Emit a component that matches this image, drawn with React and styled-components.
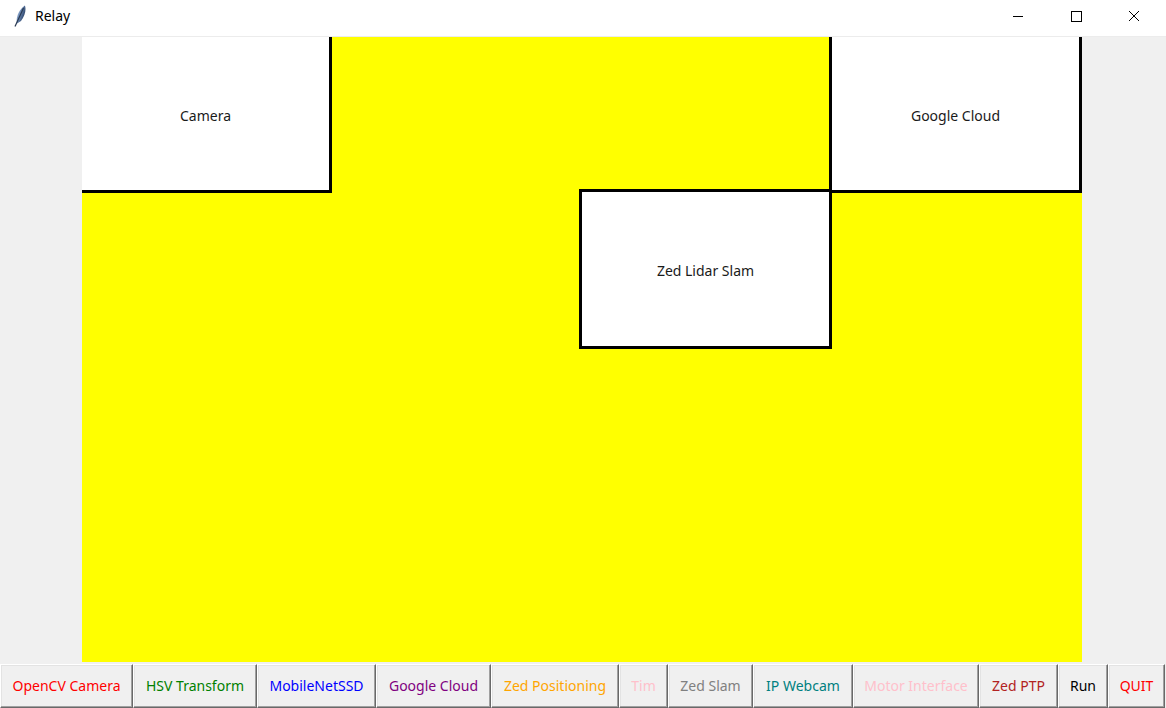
import React from 'react';
import styled, { createGlobalStyle } from 'styled-components';

const GlobalStyle = createGlobalStyle`
  html, body {
    margin: 0;
    padding: 0;
    background: #f0f0f0;
  }
  body {
    font-family: "Noto Sans", "Open Sans", "Liberation Sans", sans-serif;
    font-size: 14px;
  }
`;

const Window = styled.div`
  width: 1166px;
  height: 708px;
  display: flex;
  flex-direction: column;
  background: #f0f0f0;
  overflow: hidden;
`;

const TitleBar = styled.div`
  box-sizing: border-box;
  height: 37px;
  flex: 0 0 37px;
  padding-bottom: 5px;
  display: flex;
  align-items: center;
  background: #ffffff;
  border-bottom: 1px solid #ececec;
`;

const AppIcon = styled.div`
  width: 14px;
  height: 22px;
  margin-left: 12px;
  display: flex;
`;

const Title = styled.span`
  margin-left: 9px;
  font-size: 14px;
  color: #000;
`;

const Controls = styled.div`
  margin-left: auto;
  margin-right: 3px;
  display: flex;
  height: 100%;
`;

const ControlButton = styled.div`
  width: 58px;
  height: 100%;
  display: flex;
  align-items: center;
  justify-content: center;
`;

const Body = styled.div`
  flex: 1;
  display: flex;
  flex-direction: column;
`;

const Canvas = styled.div`
  position: relative;
  width: 1000px;
  height: 625px;
  margin-left: 82px;
  background: #ffff00;
  overflow: hidden;
`;

const Node = styled.div`
  position: absolute;
  box-sizing: border-box;
  border: 3px solid #000;
  background: #fff;
  display: flex;
  align-items: center;
  justify-content: center;
  padding-top: 3px;
  font-size: 14px;
  color: #1a1a1a;
`;

const ButtonBar = styled.div`
  margin-top: 2px;
  display: flex;
  height: 44px;
`;

const Button = styled.button`
  box-sizing: border-box;
  width: ${p => p.$w}px;
  height: 44px;
  padding: 0 0 2px;
  margin: 0;
  font-family: "Noto Sans", "Open Sans", "Liberation Sans", sans-serif;
  font-size: 14px;
  color: ${p => p.$color};
  background: #f0f0f0;
  border-style: solid;
  border-width: 1px;
  border-color: #ffffff #696969 #696969 #ffffff;
  box-shadow: inset -1px -1px 0 #a0a0a0, inset 1px 1px 0 #e3e3e3;
  white-space: nowrap;
  overflow: hidden;
  cursor: default;
`;

const nodes = [
  { label: 'Camera', left: -3, top: -3, width: 253, height: 159 },
  { label: 'Google Cloud', left: 747, top: -3, width: 253, height: 159 },
  { label: 'Zed Lidar Slam', left: 497, top: 152, width: 253, height: 160 },
];

const buttons = [
  { label: 'OpenCV Camera', color: '#ff0000', w: 133 },
  { label: 'HSV Transform', color: '#008000', w: 124 },
  { label: 'MobileNetSSD', color: '#0000ff', w: 119 },
  { label: 'Google Cloud', color: '#800080', w: 115 },
  { label: 'Zed Positioning', color: '#ffa500', w: 128 },
  { label: 'Tim', color: '#ffc0cb', w: 49 },
  { label: 'Zed Slam', color: '#808080', w: 85 },
  { label: 'IP Webcam', color: '#008080', w: 100 },
  { label: 'Motor Interface', color: '#ffc0cb', w: 126 },
  { label: 'Zed PTP', color: '#b22222', w: 79 },
  { label: 'Run', color: '#000000', w: 50 },
  { label: 'QUIT', color: '#ff0000', w: 57 },
];

const Feather = () => (
  <svg width="14" height="22" viewBox="0 0 14 22">
    <defs>
      <linearGradient id="fg" x1="0" y1="0" x2="1" y2="0.6">
        <stop offset="0" stopColor="#c3d2e6" />
        <stop offset="0.45" stopColor="#6f8db8" />
        <stop offset="1" stopColor="#1f3458" />
      </linearGradient>
    </defs>
    <path d="M12.8 0.5 C14.5 4 13 11 9 16 L5 18.5 C3.8 13 6 5.5 12.8 0.5 Z" fill="url(#fg)" />
    <path d="M11.5 3 L3 21.5" stroke="#2a3a52" strokeWidth="1.2" fill="none" />
  </svg>
);

const App = () => (
  <Window>
    <GlobalStyle />
    <TitleBar>
      <AppIcon><Feather /></AppIcon>
      <Title>Relay</Title>
      <Controls>
        <ControlButton>
          <svg width="12" height="12" viewBox="0 0 12 12">
            <path d="M1 6.5 H11" stroke="#000" strokeWidth="1" />
          </svg>
        </ControlButton>
        <ControlButton>
          <svg width="12" height="12" viewBox="0 0 12 12">
            <rect x="1.5" y="1.5" width="10" height="10" stroke="#000" strokeWidth="1" fill="none" />
          </svg>
        </ControlButton>
        <ControlButton>
          <svg width="12" height="12" viewBox="0 0 12 12">
            <path d="M1 1 L11 11 M11 1 L1 11" stroke="#000" strokeWidth="1" />
          </svg>
        </ControlButton>
      </Controls>
    </TitleBar>
    <Body>
      <Canvas>
        {nodes.map(n => (
          <Node
            key={n.label}
            style={{ left: n.left, top: n.top, width: n.width, height: n.height }}
          >
            {n.label}
          </Node>
        ))}
      </Canvas>
      <ButtonBar>
        {buttons.map(b => (
          <Button key={b.label} $w={b.w} $color={b.color}>{b.label}</Button>
        ))}
      </ButtonBar>
    </Body>
  </Window>
);

export default App;
